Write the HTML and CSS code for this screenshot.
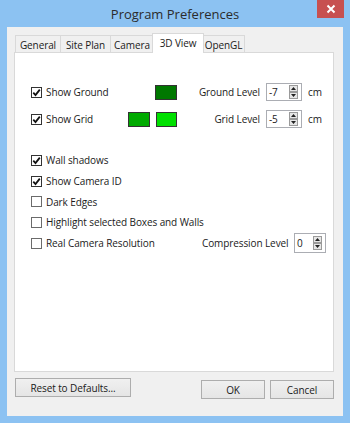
FILE: index.html
```html
<!DOCTYPE html>
<html>
<head>
<meta charset="utf-8">
<link rel="stylesheet" href="styles.css">
</head>
<body>
<div class="window">
  <div class="titlebar">
    <span class="title">Program Preferences</span>
    <span class="close"><svg width="10" height="10" viewBox="0 0 10 10"><path d="M1.5 1.5 L8.5 8.5 M8.5 1.5 L1.5 8.5" stroke="#fff" stroke-width="2"/></svg></span>
  </div>
  <div class="client">
    <div class="tabs">
      <div class="tab w-general">General</div>
      <div class="tab w-site">Site Plan</div>
      <div class="tab w-camera">Camera</div>
      <div class="tab selected w-3d">3D View</div>
      <div class="tab w-gl">OpenGL</div>
    </div>
    <div class="panel">
      <div class="row top-row r1">
        <label class="check"><span class="cb on"><svg viewBox="0 0 9 9"><path d="M1.3 4.6 L3.5 7 L7.8 1.6" fill="none" stroke="#111" stroke-width="1.8"/></svg></span>Show Ground</label>
        <div class="swatches"><span class="sw dark"></span></div>
        <span class="lbl">Ground Level</span>
        <div class="spin"><span class="val">-7</span><svg class="arrows" width="9" height="14" viewBox="0 0 9 14"><rect x="0.5" y="0.5" width="8" height="6" fill="#e6e6e6" stroke="#9a9a9a"/><rect x="0.5" y="7.5" width="8" height="6" fill="#e6e6e6" stroke="#9a9a9a"/><path d="M2 5 L4.5 2 L7 5 Z M2 9 L4.5 12 L7 9 Z" fill="#222"/></svg></div>
        <span class="unit">cm</span>
      </div>
      <div class="row top-row r2">
        <label class="check"><span class="cb on"><svg viewBox="0 0 9 9"><path d="M1.3 4.6 L3.5 7 L7.8 1.6" fill="none" stroke="#111" stroke-width="1.8"/></svg></span>Show Grid</label>
        <div class="swatches"><span class="sw mid"></span><span class="sw light"></span></div>
        <span class="lbl">Grid Level</span>
        <div class="spin"><span class="val">-5</span><svg class="arrows" width="9" height="14" viewBox="0 0 9 14"><rect x="0.5" y="0.5" width="8" height="6" fill="#e6e6e6" stroke="#9a9a9a"/><rect x="0.5" y="7.5" width="8" height="6" fill="#e6e6e6" stroke="#9a9a9a"/><path d="M2 5 L4.5 2 L7 5 Z M2 9 L4.5 12 L7 9 Z" fill="#222"/></svg></div>
        <span class="unit">cm</span>
      </div>
      <div class="list">
        <label class="check item"><span class="cb on"><svg viewBox="0 0 9 9"><path d="M1.3 4.6 L3.5 7 L7.8 1.6" fill="none" stroke="#111" stroke-width="1.8"/></svg></span>Wall shadows</label>
        <label class="check item"><span class="cb on"><svg viewBox="0 0 9 9"><path d="M1.3 4.6 L3.5 7 L7.8 1.6" fill="none" stroke="#111" stroke-width="1.8"/></svg></span>Show Camera ID</label>
        <label class="check item"><span class="cb"></span>Dark Edges</label>
        <label class="check item"><span class="cb"></span>Highlight selected Boxes and Walls</label>
        <div class="item last">
          <label class="check"><span class="cb"></span>Real Camera Resolution</label>
          <span class="lbl2">Compression Level</span>
          <div class="spin spin-c"><span class="val">0</span><svg class="arrows" width="9" height="14" viewBox="0 0 9 14"><rect x="0.5" y="0.5" width="8" height="6" fill="#e6e6e6" stroke="#9a9a9a"/><rect x="0.5" y="7.5" width="8" height="6" fill="#e6e6e6" stroke="#9a9a9a"/><path d="M2 5 L4.5 2 L7 5 Z M2 9 L4.5 12 L7 9 Z" fill="#222"/></svg></div>
        </div>
      </div>
    </div>
    <div class="buttons">
      <button class="btn reset">Reset to Defaults...</button>
      <div class="right">
        <button class="btn ok">OK</button>
        <button class="btn cancel">Cancel</button>
      </div>
    </div>
  </div>
</div>
</body>
</html>
```
FILE: styles.css
```css
* { box-sizing: border-box; }
html, body { margin: 0; padding: 0; }
body {
  width: 350px; height: 423px; overflow: hidden;
  font-family: "Open Sans", "Noto Sans", sans-serif;
  font-size: 10px; letter-spacing: -0.1px; color: #1a1a1a;
}
.window {
  width: 350px; height: 423px;
  background: #8cc2f2;
  display: flex; flex-direction: column;
  padding: 0 7px 7px 7px;
}
.titlebar {
  height: 27px; position: relative;
  display: flex; align-items: center; justify-content: center;
}
.title { font-size: 13px; letter-spacing: 0; color: #2b2b2b; padding-top: 1px; }
.close {
  position: absolute; top: 0; right: -1px;
  width: 27px; height: 18px; background: #c75050;
  display: flex; align-items: center; justify-content: center;
}
.client {
  flex: 1; background: #f0f0f0;
  padding: 6px 9px 0 7px;
  display: flex; flex-direction: column;
}
.tabs {
  height: 19px; display: flex; align-items: flex-end;
  padding-left: 1px; position: relative; z-index: 1;
}
.tab {
  height: 17px; border: 1px solid #d9d9d9; border-bottom: none;
  background: #f0f0f0; margin-right: -1px;
  display: flex; align-items: center; justify-content: center;
  padding-top: 1px; white-space: nowrap;
}
.tab.selected {
  height: 20px; background: #fff; margin-bottom: -1px;
  margin-left: -1px; margin-right: -2px; position: relative; z-index: 2;
  padding-bottom: 3px;
}
.w-general { width: 46px; }
.w-site { width: 51px; }
.w-camera { width: 44px; }
.w-3d { width: 52px; }
.w-gl { width: 43px; }
.panel {
  width: 320px; height: 320px;
  background: #fff; border: 1px solid #d9d9d9;
  padding: 29px 0 0 16px;
  display: flex; flex-direction: column;
}
.row { display: flex; align-items: center; height: 20px; }
.r2 { margin-top: 7px; }
.check { display: flex; align-items: center; white-space: nowrap; }
.cb {
  width: 11px; height: 11px; border: 1px solid #333;
  background: #fff; margin-right: 4px; flex: none;
  display: flex; align-items: center; justify-content: center;
}
.cb svg { width: 9px; height: 9px; display: block; }
.item .cb, .last .cb { border-color: #6b6b6b; }
.item .cb.on { border-color: #333; }
.top-row .check { width: 97px; }
.swatches { width: 49px; display: flex; justify-content: flex-end; gap: 6px; }
.sw { width: 22px; height: 15px; border: 1px solid #333; display: block; }
.sw.dark { background: #007800; }
.sw.mid { background: #00aa00; }
.sw.light { background: #00e000; }
.lbl { width: 83px; text-align: right; white-space: nowrap; }
.spin {
  width: 36px; height: 18px; margin-left: 6px;
  border: 1px solid #abadb3; background: #fff;
  display: flex; align-items: center; justify-content: space-between;
  padding: 0 3px 0 2px;
}
.unit { margin-left: 6px; }
.list { margin-top: 21px; display: flex; flex-direction: column; }
.item { height: 20.7px; display: flex; align-items: center; }
.last { height: 21px; }
.last .check { width: 171px; }
.lbl2 { width: 92px; white-space: nowrap; }
.spin-c { width: 32px; height: 20px; margin-left: 0; }
.buttons {
  display: flex; justify-content: space-between; align-items: flex-start;
  margin-top: 6px; padding-left: 1px;
}
.right { display: flex; gap: 5px; margin-top: 2px; }
.btn {
  font-family: inherit; font-size: 10px; letter-spacing: -0.1px; color: #1a1a1a;
  border: 1px solid #adadad; background: linear-gradient(#f0f0f0, #e5e5e5);
  height: 19px; padding: 0; margin: 0;
}
.reset { width: 116px; }
.ok, .cancel { width: 64px; }
```
